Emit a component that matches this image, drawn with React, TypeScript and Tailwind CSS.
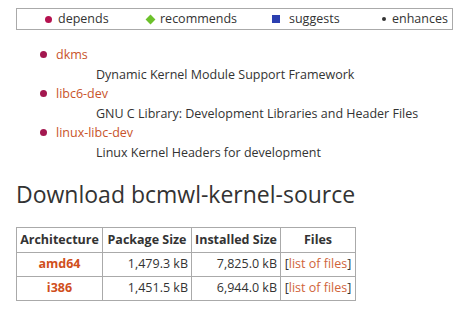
import React from 'react';

const deps = [
    { name: 'dkms', desc: 'Dynamic Kernel Module Support Framework' },
    { name: 'libc6-dev', desc: 'GNU C Library: Development Libraries and Header Files' },
    { name: 'linux-libc-dev', desc: 'Linux Kernel Headers for development' },
];

const rows = [
    { arch: 'amd64', pkg: '1,479.3 kB', inst: '7,825.0 kB' },
    { arch: 'i386', pkg: '1,451.5 kB', inst: '6,944.0 kB' },
];

const App: React.FC = () => {
    return (
        <div className="w-[469px] h-[322px] bg-white text-[#333] text-[12.5px] overflow-hidden" style={{ fontFamily: '"Open Sans", sans-serif' }}>
            <div className="pt-2 px-4">
                <ul className="flex items-center border border-[#aaa] h-[22px] leading-none whitespace-nowrap">
                    <li className="flex items-center gap-[6px] w-[130px] pl-[28px]">
                        <span className="w-[7px] h-[7px] rounded-full bg-[#b5124f]" />
                        <span>depends</span>
                    </li>
                    <li className="flex items-center gap-[6px] w-[125px]">
                        <span className="w-[7px] h-[7px] rotate-45 bg-[#6cc12b]" />
                        <span>recommends</span>
                    </li>
                    <li className="flex items-center gap-[9px] w-[110px]">
                        <span className="w-[8px] h-[8px] bg-[#2b3fb0]" />
                        <span>suggests</span>
                    </li>
                    <li className="flex items-center gap-[6px]">
                        <span className="w-[4px] h-[4px] rounded-full bg-[#333]" />
                        <span>enhances</span>
                    </li>
                </ul>

                <ul className="mt-[15px] pl-[24px] leading-[19.5px]">
                    {deps.map((d) => (
                        <li key={d.name}>
                            <div className="flex items-center gap-[9px]">
                                <span className="w-[7px] h-[7px] rounded-full bg-[#a3174f]" />
                                <a className="text-[#c8532a]">{d.name}</a>
                            </div>
                            <div className="pl-[56px]">{d.desc}</div>
                        </li>
                    ))}
                </ul>

                <h1 className="mt-[17px] text-[23px] leading-[30px] text-[#333]">Download bcmwl-kernel-source</h1>

                <table className="mt-[18px] border-collapse border border-[#aaa] table-fixed w-[340px] whitespace-nowrap">
                    <thead>
                        <tr className="h-[25px]">
                            <th className="border border-[#aaa] w-[86px] px-[2px] font-bold text-center">Architecture</th>
                            <th className="border border-[#aaa] w-[89px] px-[2px] font-bold text-center">Package Size</th>
                            <th className="border border-[#aaa] w-[89px] px-[2px] font-bold text-center">Installed Size</th>
                            <th className="border border-[#aaa] px-[2px] font-bold text-center">Files</th>
                        </tr>
                    </thead>
                    <tbody>
                        {rows.map((r) => (
                            <tr key={r.arch} className="h-[24px]">
                                <td className="border border-[#aaa] px-[3px] text-center font-bold text-[#d04f1c]">{r.arch}</td>
                                <td className="border border-[#aaa] px-[3px] text-right">{r.pkg}</td>
                                <td className="border border-[#aaa] px-[3px] text-right">{r.inst}</td>
                                <td className="border border-[#aaa] px-[2px] text-center">
                                    [<a className="text-[#d0643a]">list of files</a>]
                                </td>
                            </tr>
                        ))}
                    </tbody>
                </table>
            </div>
        </div>
    );
};

export default App;
